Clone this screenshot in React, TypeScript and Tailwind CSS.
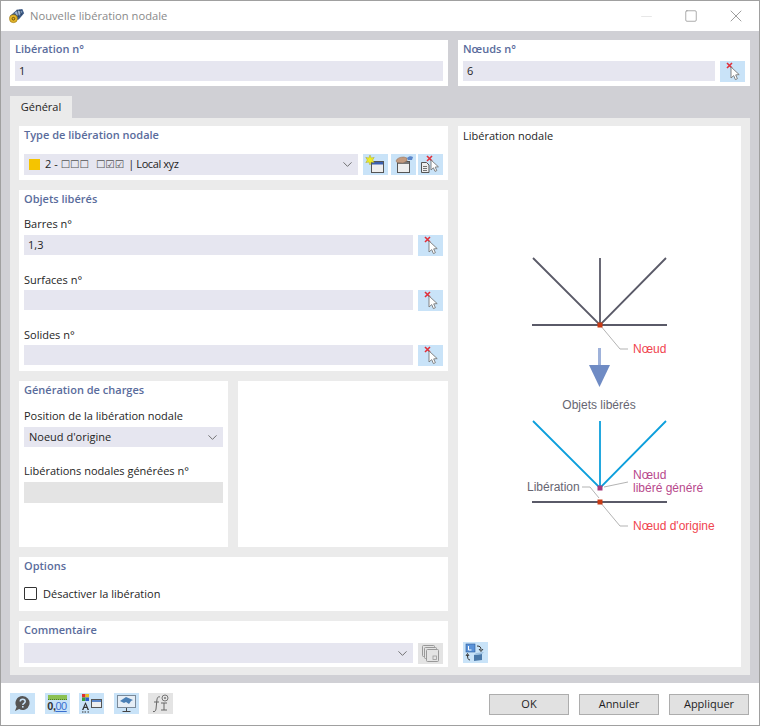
import { ReactNode } from "react";
import { ChevronDown, Minus, Square, X } from "lucide-react";

function Title({ children }: { children: ReactNode }) {
  return (
    <div className="flex h-[17px] items-center text-[11px] font-semibold leading-none text-[#5a6c9c]">
      {children}
    </div>
  );
}

function Label({ children }: { children: ReactNode }) {
  return (
    <div className="flex h-[16px] items-center text-[11px] leading-none text-[#1e1e1e]">
      {children}
    </div>
  );
}

function Field({ value }: { value?: string }) {
  return (
    <div className="flex h-[20px] min-w-0 flex-1 items-center bg-[#e6e6f0] px-[4px] text-[11px] text-[#1e1e1e]">
      {value}
    </div>
  );
}

function Select({
  children,
  tall,
}: {
  children?: ReactNode;
  tall?: boolean;
}) {
  return (
    <div
      className={`flex min-w-0 flex-1 items-center justify-between bg-[#e6e6f0] pl-[5px] pr-[3px] text-[11px] text-[#1e1e1e] ${tall ? "h-[21px]" : "h-[20px]"}`}
    >
      <div className="flex items-center">{children}</div>
      <ChevronDown size={15} strokeWidth={1.3} className="text-[#555]" />
    </div>
  );
}

function IconButton({
  children,
  gray,
}: {
  children: ReactNode;
  gray?: boolean;
}) {
  return (
    <div
      className={`flex h-[21px] w-[25px] shrink-0 items-center justify-center ${gray ? "bg-[#e4e4e4]" : "bg-[#c9e3f8]"}`}
    >
      {children}
    </div>
  );
}

function PickIcon() {
  return (
    <svg width="19" height="19" viewBox="0 0 19 19">
      <path d="M4 1l5 5M9 1L4 6" stroke="#e0303a" strokeWidth="1.6" />
      <path
        d="M8 5l0 11 2.7-2.4 1.7 4 2-.9-1.7-3.8 3.5-.3z"
        fill="#fff"
        stroke="#777"
        strokeWidth="0.9"
      />
    </svg>
  );
}

function NewIcon() {
  return (
    <svg width="21" height="19" viewBox="0 0 21 19">
      <rect x="6.5" y="6.5" width="12" height="11" fill="#eee" stroke="#555" />
      <rect x="7" y="7" width="11" height="2.5" fill="#3a5fb0" />
      <path
        d="M5 0l1.2 3 3-.6-1.6 2.6 1.6 2.6-3-.6L5 10 3.8 7 .8 7.6 2.4 5 .8 2.4l3 .6z"
        fill="#ecec2a"
        stroke="#b0a820"
        strokeWidth="0.5"
      />
    </svg>
  );
}

function LibraryIcon() {
  return (
    <svg width="21" height="19" viewBox="0 0 21 19">
      <rect x="4.5" y="6.5" width="12" height="11" fill="#eee" stroke="#555" />
      <rect x="5" y="7" width="11" height="2" fill="#777" />
      <path d="M3 6c1-3 4-4 8-4l3 1 0 3-4 2-6-.5z" fill="#c29b80" stroke="#8f6f5a" strokeWidth="0.5" />
      <path d="M14 3c2-2 4-2 6-1l-1 3-4 0z" fill="#5b86c9" />
    </svg>
  );
}

function PickDocIcon() {
  return (
    <svg width="21" height="19" viewBox="0 0 21 19">
      <path d="M7 1l5 5M12 1L7 6" stroke="#e0303a" strokeWidth="1.6" />
      <path d="M1.5 7.5h5l2.5 2.5v7.5h-7.5z" fill="#eee" stroke="#555" />
      <path d="M3 11.5h4M3 13.5h4M3 15.5h4" stroke="#555" strokeWidth="0.8" />
      <path
        d="M11 5l0 10 2.4-2.2 1.6 3.6 1.8-.8-1.6-3.5 3.2-.3z"
        fill="#fff"
        stroke="#777"
        strokeWidth="0.9"
      />
    </svg>
  );
}

function CopyIcon() {
  return (
    <svg width="21" height="19" viewBox="0 0 21 19">
      <rect x="2.5" y="1.5" width="12" height="11" rx="1" fill="#e4e4e4" stroke="#999" />
      <rect x="4.5" y="3.5" width="12" height="11" rx="1" fill="#e4e4e4" stroke="#999" />
      <rect x="6.5" y="5.5" width="12" height="12" rx="1" fill="#e4e4e4" stroke="#999" />
      <rect x="13" y="12" width="3.5" height="3.5" fill="#e4e4e4" stroke="#999" strokeWidth="0.8" />
    </svg>
  );
}

function AppIcon() {
  return (
    <svg width="16" height="16" viewBox="0 0 18 18">
      <path d="M1 9L9 2l6-1 2 5-6 7-6 1z" fill="#3d5a86" />
      <path d="M5 6l5-3 5 1-4 5z" fill="#9fb6d4" />
      <path d="M9 2l2 8M12 2l2 6M6 5l3 7" stroke="#223650" strokeWidth="0.8" />
      <circle cx="5" cy="12" r="4.5" fill="#e4b52a" stroke="#8a6a10" strokeWidth="0.6" />
      <circle cx="5" cy="12" r="1.5" fill="none" stroke="#5b4508" strokeWidth="1" />
    </svg>
  );
}

function HelpIcon() {
  return (
    <svg width="19" height="19" viewBox="0 0 19 19">
      <path d="M9.5 2a7 7 0 1 1-3.4 13.1L2 17l1.6-4.2A7 7 0 0 1 9.5 2z" fill="#555" />
      <path
        d="M7.2 7.6c0-3 5-3 5 0 0 1.8-2.4 1.8-2.4 3.5"
        fill="none"
        stroke="#c9e3f8"
        strokeWidth="1.5"
      />
      <rect x="9" y="12" width="1.6" height="1.6" fill="#c9e3f8" />
    </svg>
  );
}

function UnitsIcon() {
  return (
    <div className="flex w-[19px] flex-col items-center">
      <div className="h-[5px] w-full border-b border-dotted border-[#4f7a2a] bg-[#8cc152]" />
      <div className="font-['Liberation_Sans',sans-serif] text-[11px] font-bold leading-[13px] tracking-[-0.5px] text-[#333]">
        0,<span className="font-normal text-[#3a6fd0] underline">00</span>
      </div>
    </div>
  );
}

function ColorIcon() {
  return (
    <svg width="21" height="19" viewBox="0 0 21 19">
      <rect x="1" y="0" width="3.5" height="3.5" fill="#e03030" />
      <rect x="4.5" y="0" width="3.5" height="3.5" fill="#e8c020" />
      <rect x="1" y="3.5" width="3.5" height="3.5" fill="#3aa040" />
      <rect x="4.5" y="3.5" width="3.5" height="3.5" fill="#3060d0" />
      <path d="M4.5 8L1 16h1.5l.7-2h2.6l.7 2H8z M4.5 10.5l-.9 2.3h1.8z" fill="#333" fillRule="evenodd" />
      <path d="M1 18h1.5M3.5 18H5M6.5 18H8" stroke="#333" />
      <rect x="10.5" y="5.5" width="10" height="8" fill="#eee" stroke="#555" />
      <rect x="11" y="6" width="9" height="2" fill="#5b86c9" />
    </svg>
  );
}

function ScreenIcon() {
  return (
    <svg width="21" height="19" viewBox="0 0 21 19">
      <rect x="1.5" y="1.5" width="18" height="12" fill="#e6eef6" stroke="#7a8a9a" />
      <path d="M4 7l6-4 7 3-2 1-2 3-3-2-2 1z" fill="#4a7fb5" />
      <path d="M10.5 14v3M6.5 17.5h8" stroke="#444" />
    </svg>
  );
}

function FormulaIcon() {
  return (
    <svg width="21" height="19" viewBox="0 0 21 19">
      <path d="M10 3C8 2 7 4 6.8 7L6 15c-.2 2-1.4 3-3 2.500" fill="none" stroke="#666" />
      <path d="M4 8h5" stroke="#666" />
      <path d="M11 9h6M14 9v7M11 16h6" stroke="#666" />
      <circle cx="15" cy="4" r="3" fill="none" stroke="#777" />
      <circle cx="15" cy="4" r="1" fill="#777" />
    </svg>
  );
}

function SwapIcon() {
  return (
    <svg width="21" height="19" viewBox="0 0 21 19">
      <rect x="1" y="1" width="9" height="8" fill="#5a92d8" stroke="#2a5a9a" strokeWidth="0.6" />
      <path d="M3.5 3v4h3" stroke="#fff" fill="none" />
      <path d="M12 3c3 0 4 1 4 4M14 6l2 2.5L18 6" fill="none" stroke="#333" />
      <path d="M5 17c-2 0-2.5-2-2.5-5M1 13l1.5-2.5L4 13" fill="none" stroke="#333" />
      <path d="M9 12l8-1v6l-8 1z" fill="#4a78a8" />
      <path d="M9 12l2-2 8-1-2 2z" fill="#9cc0e0" />
    </svg>
  );
}

function PushButton({ label }: { label: string }) {
  return (
    <div className="flex h-[21px] w-[80px] items-center justify-center border border-[#adadad] bg-[#e1e1e1] text-[11px] text-[#1e1e1e]">
      {label}
    </div>
  );
}

function Diagram() {
  return (
    <svg
      width="283"
      height="300"
      viewBox="458 240 283 300"
      className="font-['Liberation_Sans',sans-serif]"
      fontSize="12"
    >
      <g stroke="#5a5a68" strokeWidth="1.8" fill="none">
        <path d="M533 258l67 67 66-67M600 258v67M532 325h135" />
        <path d="M532 502h135" />
      </g>
      <g stroke="#0d9fdc" strokeWidth="1.8" fill="none">
        <path d="M533 421l67 67 66-67M600 421v67" />
      </g>
      <g stroke="#aaa" strokeWidth="0.9" fill="none">
        <path d="M600 325l20 24h8M600 502l20 24h8M582 487h8l9 11" />
        <path d="M604 487l24-5" />
      </g>
      <rect x="597.5" y="322.5" width="5" height="5" fill="#c83a14" />
      <rect x="597.5" y="485.5" width="5" height="5" fill="#a83c7c" />
      <rect x="597.5" y="499.5" width="5" height="5" fill="#c83a14" />
      <path d="M598 348h3v17h-3z" fill="#9fb2da" />
      <path d="M589 365h21l-10.5 22z" fill="#6f8bc4" />
      <text x="633" y="353" fill="#f0454f">Nœud</text>
      <text x="599" y="409" textAnchor="middle" fill="#666672">Objets libérés</text>
      <text x="633" y="479" fill="#b8488c">Nœud</text>
      <text x="633" y="492" fill="#b8488c">libéré généré</text>
      <text x="527" y="491" fill="#666672">Libération</text>
      <text x="633" y="530" fill="#f0454f">Nœud d'origine</text>
    </svg>
  );
}

export default function App() {
  return (
    <div className="flex h-[726px] w-[760px] flex-col border border-[#a0a0a0] bg-white font-['Open_Sans',sans-serif]">
      <div className="flex h-[30px] shrink-0 items-center justify-between pl-[8px] pr-[13px]">
        <div className="flex items-center gap-[5px]">
          <AppIcon />
          <span className="text-[11.2px] text-[#8a8a8a]">Nouvelle libération nodale</span>
        </div>
        <div className="flex items-center text-[#8a8a8a]">
          <Minus size={17} strokeWidth={1} className="mr-[29px] text-[#ddd]" />
          <Square size={14} strokeWidth={1.2} className="mr-[28px]" />
          <X size={20} strokeWidth={1} />
        </div>
      </div>

      <div className="flex flex-col bg-[#d0d0d5] pb-[8px] pl-[9px] pr-[9px] pt-[9px]">
        <div className="flex gap-[10px]">
          <div className="w-[438px] bg-white px-[5px] pb-[5px]">
            <Title>Libération n°</Title>
            <div className="mt-[4px] flex">
              <Field value="1" />
            </div>
          </div>
          <div className="flex-1 bg-white px-[5px] pb-[4px]">
            <Title>Nœuds n°</Title>
            <div className="mt-[4px] flex items-start gap-[5px]">
              <Field value="6" />
              <IconButton>
                <PickIcon />
              </IconButton>
            </div>
          </div>
        </div>

        <div className="mt-[10px] flex h-[22px] w-[62px] items-center justify-center bg-[#ebebeb] text-[11px] text-[#1e1e1e]">
          Général
        </div>

        <div className="flex h-[557px] gap-[10px] bg-[#ebebeb] px-[9px] py-[8px]">
          <div className="flex w-[429px] flex-col gap-[10px]">
            <div className="h-[54px] bg-white px-[5px]">
              <Title>Type de libération nodale</Title>
              <div className="mt-[11px] flex items-start gap-[5px]">
                <Select tall>
                  <div className="mr-[5px] h-[11px] w-[11px] bg-[#f5c400]" />
                  <span>2 -</span>
                  <span className="ml-[3px] font-['DejaVu_Sans',sans-serif] text-[10.5px] text-[#555]">
                    ☐☐☐
                  </span>
                  <span className="ml-[7px] font-['DejaVu_Sans',sans-serif] text-[10.5px] text-[#555]">
                    ☐☑☑
                  </span>
                  <span className="ml-[4px] tracking-[-0.4px]">| Local xyz</span>
                </Select>
                <div className="flex gap-[2.5px]">
                  <IconButton>
                    <NewIcon />
                  </IconButton>
                  <IconButton>
                    <LibraryIcon />
                  </IconButton>
                  <IconButton>
                    <PickDocIcon />
                  </IconButton>
                </div>
              </div>
            </div>

            <div className="h-[181px] bg-white px-[5px]">
              <Title>Objets libérés</Title>
              <div className="mt-[8px]">
                <Label>Barres n°</Label>
              </div>
              <div className="mt-[4px] flex items-start gap-[5px]">
                <Field value="1,3" />
                <IconButton>
                  <PickIcon />
                </IconButton>
              </div>
              <div className="mt-[15px]">
                <Label>Surfaces n°</Label>
              </div>
              <div className="mt-[3px] flex items-start gap-[5px]">
                <Field />
                <IconButton>
                  <PickIcon />
                </IconButton>
              </div>
              <div className="mt-[15px]">
                <Label>Solides n°</Label>
              </div>
              <div className="mt-[3px] flex items-start gap-[5px]">
                <Field />
                <IconButton>
                  <PickIcon />
                </IconButton>
              </div>
            </div>

            <div className="flex h-[166px] gap-[10px]">
              <div className="w-[209px] bg-white px-[5px]">
                <Title>Génération de charges</Title>
                <div className="mt-[9px]">
                  <Label>Position de la libération nodale</Label>
                </div>
                <div className="mt-[4px] flex">
                  <Select>Noeud d'origine</Select>
                </div>
                <div className="mt-[15px]">
                  <Label>Libérations nodales générées n°</Label>
                </div>
                <div className="mt-[4px] h-[21px] bg-[#e4e4e4]" />
              </div>
              <div className="flex-1 bg-white" />
            </div>

            <div className="h-[54px] bg-white px-[5px]">
              <Title>Options</Title>
              <div className="mt-[13px] flex items-center gap-[6px]">
                <div className="h-[13px] w-[13px] rounded-[1px] border border-[#333] bg-white" />
                <span className="pb-[1px] text-[11px] leading-none text-[#1e1e1e]">
                  Désactiver la libération
                </span>
              </div>
            </div>

            <div className="h-[46px] bg-white px-[5px]">
              <Title>Commentaire</Title>
              <div className="mt-[5px] flex items-start gap-[5px]">
                <Select />
                <IconButton gray>
                  <CopyIcon />
                </IconButton>
              </div>
            </div>
          </div>

          <div className="flex flex-1 flex-col bg-white">
            <div className="flex h-[20px] items-center px-[5px] text-[11px] text-[#1e1e1e]">
              Libération nodale
            </div>
            <div className="mt-[94px]">
              <Diagram />
            </div>
            <div className="mt-auto pb-[4px] pl-[5px]">
              <IconButton>
                <SwapIcon />
              </IconButton>
            </div>
          </div>
        </div>
      </div>

      <div className="flex flex-1 items-start justify-between pl-[9px] pr-[10px] pt-[10px]">
        <div className="flex gap-[9.5px]">
          <IconButton>
            <HelpIcon />
          </IconButton>
          <IconButton>
            <UnitsIcon />
          </IconButton>
          <IconButton>
            <ColorIcon />
          </IconButton>
          <IconButton>
            <ScreenIcon />
          </IconButton>
          <IconButton gray>
            <FormulaIcon />
          </IconButton>
        </div>
        <div className="mt-[1px] flex gap-[10px]">
          <PushButton label="OK" />
          <PushButton label="Annuler" />
          <PushButton label="Appliquer" />
        </div>
      </div>
    </div>
  );
}
